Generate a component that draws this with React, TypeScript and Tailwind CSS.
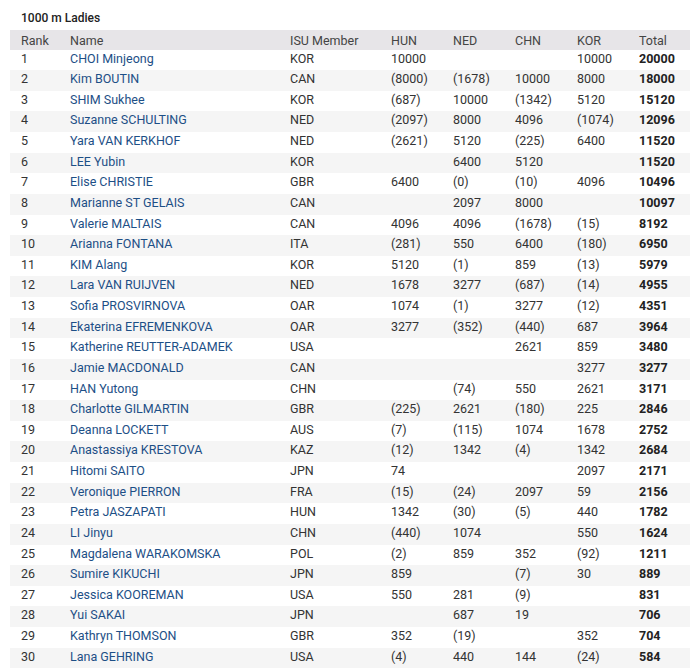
import React from "react";

type Row = [string, string, string, string, string, string, string, string];

const rows: Row[] = [
  ["1", "CHOI Minjeong", "KOR", "10000", "", "", "10000", "20000"],
  ["2", "Kim BOUTIN", "CAN", "(8000)", "(1678)", "10000", "8000", "18000"],
  ["3", "SHIM Sukhee", "KOR", "(687)", "10000", "(1342)", "5120", "15120"],
  ["4", "Suzanne SCHULTING", "NED", "(2097)", "8000", "4096", "(1074)", "12096"],
  ["5", "Yara VAN KERKHOF", "NED", "(2621)", "5120", "(225)", "6400", "11520"],
  ["6", "LEE Yubin", "KOR", "", "6400", "5120", "", "11520"],
  ["7", "Elise CHRISTIE", "GBR", "6400", "(0)", "(10)", "4096", "10496"],
  ["8", "Marianne ST GELAIS", "CAN", "", "2097", "8000", "", "10097"],
  ["9", "Valerie MALTAIS", "CAN", "4096", "4096", "(1678)", "(15)", "8192"],
  ["10", "Arianna FONTANA", "ITA", "(281)", "550", "6400", "(180)", "6950"],
  ["11", "KIM Alang", "KOR", "5120", "(1)", "859", "(13)", "5979"],
  ["12", "Lara VAN RUIJVEN", "NED", "1678", "3277", "(687)", "(14)", "4955"],
  ["13", "Sofia PROSVIRNOVA", "OAR", "1074", "(1)", "3277", "(12)", "4351"],
  ["14", "Ekaterina EFREMENKOVA", "OAR", "3277", "(352)", "(440)", "687", "3964"],
  ["15", "Katherine REUTTER-ADAMEK", "USA", "", "", "2621", "859", "3480"],
  ["16", "Jamie MACDONALD", "CAN", "", "", "", "3277", "3277"],
  ["17", "HAN Yutong", "CHN", "", "(74)", "550", "2621", "3171"],
  ["18", "Charlotte GILMARTIN", "GBR", "(225)", "2621", "(180)", "225", "2846"],
  ["19", "Deanna LOCKETT", "AUS", "(7)", "(115)", "1074", "1678", "2752"],
  ["20", "Anastassiya KRESTOVA", "KAZ", "(12)", "1342", "(4)", "1342", "2684"],
  ["21", "Hitomi SAITO", "JPN", "74", "", "", "2097", "2171"],
  ["22", "Veronique PIERRON", "FRA", "(15)", "(24)", "2097", "59", "2156"],
  ["23", "Petra JASZAPATI", "HUN", "1342", "(30)", "(5)", "440", "1782"],
  ["24", "LI Jinyu", "CHN", "(440)", "1074", "", "550", "1624"],
  ["25", "Magdalena WARAKOMSKA", "POL", "(2)", "859", "352", "(92)", "1211"],
  ["26", "Sumire KIKUCHI", "JPN", "859", "", "(7)", "30", "889"],
  ["27", "Jessica KOOREMAN", "USA", "550", "281", "(9)", "", "831"],
  ["28", "Yui SAKAI", "JPN", "", "687", "19", "", "706"],
  ["29", "Kathryn THOMSON", "GBR", "352", "(19)", "", "352", "704"],
  ["30", "Lana GEHRING", "USA", "(4)", "440", "144", "(24)", "584"],
];

const cols = "grid grid-cols-[50px_220px_101px_62px_62px_62px_62px_61px]";

export default function App() {
  return (
    <div
      className="w-[700px] h-[670px] bg-white text-[12.5px] text-[#333] overflow-hidden"
      style={{ fontFamily: "Roboto, 'Liberation Sans', sans-serif" }}
    >
      <div className="pl-[21px] pt-[11px] h-[30px] text-[12px] font-medium text-[#222] leading-[14px]">
        1000 m Ladies
      </div>
      <div className="ml-[10px] w-[680px]">
        <div className={`${cols} h-[19.5px] items-start pt-[2px] leading-[17.5px] bg-[#e7e5e8] text-[#444]`}>
          <div className="pl-[11px]">Rank</div>
          <div className="pl-[10px]">Name</div>
          <div className="pl-[10px]">ISU Member</div>
          <div className="pl-[10px]">HUN</div>
          <div className="pl-[10px]">NED</div>
          <div className="pl-[10px]">CHN</div>
          <div className="pl-[10px]">KOR</div>
          <div className="pl-[10px]">Total</div>
        </div>
        {rows.map((r, i) => (
          <div
            key={r[0]}
            className={`${cols} h-[20.63px] items-start leading-[17.5px] ${i % 2 === 1 ? "bg-[#f5f5f5]" : "bg-white"}`}
          >
            <div className="pl-[11px]">{r[0]}</div>
            <div className="pl-[10px] text-[#1d4f86] whitespace-nowrap">{r[1]}</div>
            <div className="pl-[10px]">{r[2]}</div>
            <div className="pl-[10px]">{r[3]}</div>
            <div className="pl-[10px]">{r[4]}</div>
            <div className="pl-[10px]">{r[5]}</div>
            <div className="pl-[10px]">{r[6]}</div>
            <div className="pl-[10px] font-bold text-[#222]">{r[7]}</div>
          </div>
        ))}
      </div>
    </div>
  );
}
